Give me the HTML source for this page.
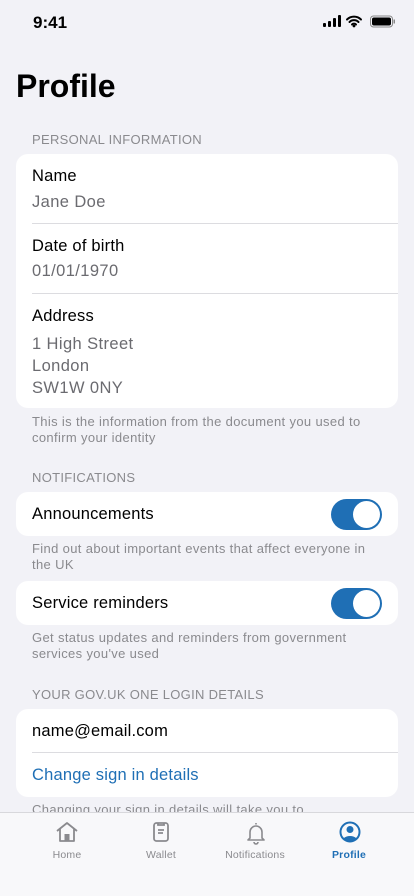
<!DOCTYPE html>
<html><head><meta charset="utf-8"><style>
*{margin:0;padding:0;box-sizing:border-box}
body{width:414px;height:896px;overflow:hidden;background:#f2f2f7;font-family:"Liberation Sans",sans-serif;position:relative;color:#000}
.a{position:absolute;white-space:nowrap}
.card{position:absolute;left:16px;width:382px;background:#fff;border-radius:12px}
.hd{position:absolute;left:32px;font-size:13px;color:#8a8a8e;letter-spacing:.3px}
.ft{position:absolute;left:32px;font-size:13px;color:#8a8a8e;line-height:16px;width:345px;letter-spacing:.35px}
.lb{font-size:16.5px;color:#000;letter-spacing:.2px}
.vl{font-size:16.5px;color:#6b6b70;letter-spacing:.4px}
.sep{position:absolute;left:16px;right:0;height:1px;background:#dcdce0}
.tg{position:absolute;left:315px;width:51px;height:31px;border-radius:16px;background:#1f6fb5}
.tg::after{content:"";position:absolute;right:2px;top:2px;width:27px;height:27px;border-radius:50%;background:#fff}
.tab{position:absolute;top:812px;left:0;width:414px;height:84px;background:#f8f8fa;border-top:1px solid #d8d8dc}
.tl{position:absolute;top:36px;font-size:10.5px;color:#8a8a8e;transform:translateX(-50%);letter-spacing:.2px}
</style></head><body>
<div class="a" style="left:33px;top:13px;font-size:17px;font-weight:bold">9:41</div>
<svg class="a" style="left:323px;top:15px" width="72" height="14" viewBox="0 0 72 14">
<rect x="0" y="8" width="3" height="4" rx="1"/><rect x="5" y="6" width="3" height="6" rx="1"/><rect x="10" y="3" width="3" height="9" rx="1"/><rect x="15" y="0" width="3" height="12" rx="1"/>
<path d="M24 4.5a10 10 0 0 1 14 0M26.5 7a6.3 6.3 0 0 1 9 0M29 9.5a2.8 2.8 0 0 1 4 0" stroke="#000" stroke-width="2" fill="none" stroke-linecap="round"/><circle cx="31" cy="11" r="1.4"/>
<rect x="47.5" y="1" width="22" height="11" rx="3" fill="none" stroke="#888" stroke-width="1"/><rect x="49" y="2.5" width="19" height="8" rx="2"/><rect x="70.5" y="4.5" width="1.5" height="4" fill="#888"/></svg>
<div class="a" style="left:16px;top:68px;font-size:32px;font-weight:bold">Profile</div>

<div class="hd" style="top:132px">PERSONAL INFORMATION</div>
<div class="card" style="top:154px;height:254px">
<div class="a lb" style="left:16px;top:13px">Name</div>
<div class="a vl" style="left:16px;top:39px">Jane Doe</div>
<div class="sep" style="top:69px"></div>
<div class="a lb" style="left:16px;top:83px">Date of birth</div>
<div class="a vl" style="left:16px;top:108px">01/01/1970</div>
<div class="sep" style="top:139px"></div>
<div class="a lb" style="left:16px;top:153px">Address</div>
<div class="a vl" style="left:16px;top:179px;line-height:22px">1 High Street<br>London<br>SW1W 0NY</div>
</div>
<div class="ft" style="top:414px">This is the information from the document you used to confirm your identity</div>

<div class="hd" style="top:470px">NOTIFICATIONS</div>
<div class="card" style="top:492px;height:44px">
<div class="a lb" style="left:16px;top:13px">Announcements</div><div class="tg" style="top:7px"></div></div>
<div class="ft" style="top:541px">Find out about important events that affect everyone in the UK</div>
<div class="card" style="top:581px;height:44px">
<div class="a lb" style="left:16px;top:13px">Service reminders</div><div class="tg" style="top:7px"></div></div>
<div class="ft" style="top:630px">Get status updates and reminders from government services you've used</div>

<div class="hd" style="top:687px">YOUR GOV.UK ONE LOGIN DETAILS</div>
<div class="card" style="top:709px;height:88px">
<div class="a lb" style="left:16px;top:13px">name@email.com</div>
<div class="sep" style="top:43px"></div>
<div class="a lb" style="left:16px;top:57px;color:#1f6fb5">Change sign in details</div></div>
<div class="ft" style="top:802px">Changing your sign in details will take you to</div>

<div class="tab">
<svg class="a" style="left:55px;top:8px" width="24" height="22" viewBox="0 0 24 22" fill="none" stroke="#8a8a8e" stroke-width="1.8" stroke-linejoin="round"><path d="M2 10 12 2l10 8M5 8v12h14V8"/><rect x="9.5" y="13" width="5" height="7" fill="#8a8a8e" stroke="none"/></svg>
<svg class="a" style="left:152px;top:8px" width="18" height="22" viewBox="0 0 18 22" fill="none" stroke="#8a8a8e" stroke-width="1.8"><rect x="2" y="2" width="14" height="18" rx="2.5"/><path d="M6 2v2h6V2M6 9h6M6 12h5"/></svg>
<svg class="a" style="left:246px;top:8px" width="20" height="24" viewBox="0 0 20 24" fill="none" stroke="#8a8a8e" stroke-width="1.6" stroke-linejoin="round"><path d="M10 2v1.5M4 17V11a6 6 0 0 1 12 0v6l2 2H2z"/><path d="M8 21a2 2 0 0 0 4 0"/></svg>
<svg class="a" style="left:339px;top:8px" width="22" height="22" viewBox="0 0 22 22"><circle cx="11" cy="11" r="9.5" fill="none" stroke="#1f6fb5" stroke-width="2"/><circle cx="11" cy="8.5" r="3.5" fill="#1f6fb5"/><path d="M4.5 17.5a8 6 0 0 1 13 0A9 9 0 0 1 4.5 17.5z" fill="#1f6fb5"/></svg>
<div class="tl" style="left:67px">Home</div>
<div class="tl" style="left:161px">Wallet</div>
<div class="tl" style="left:255px">Notifications</div>
<div class="tl" style="left:349px;color:#1f6fb5;font-weight:bold">Profile</div>
</div>
</body></html>
